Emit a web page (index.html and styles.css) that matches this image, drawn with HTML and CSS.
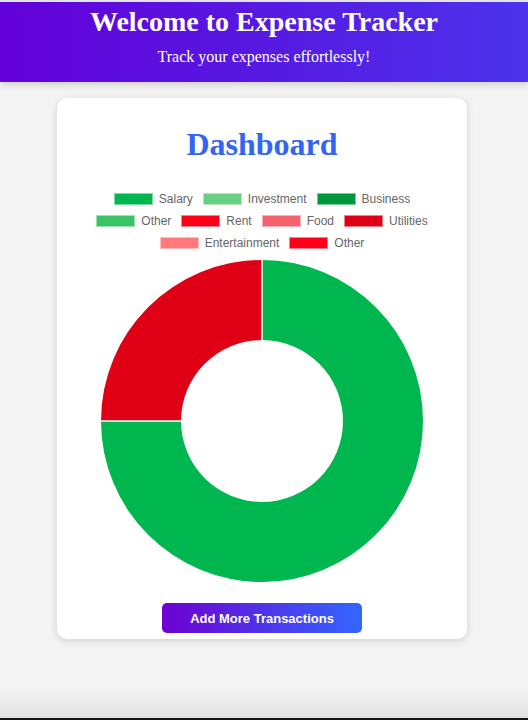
FILE: index.html
```html
<!DOCTYPE html>
<html>
<head>
<meta charset="utf-8">
<link rel="stylesheet" href="styles.css">
</head>
<body>
<header class="site-header">
  <h1 class="site-title">Welcome to Expense Tracker</h1>
  <p class="site-sub">Track your expenses effortlessly!</p>
</header>
<main class="page">
  <section class="card">
    <h2 class="card-title">Dashboard</h2>
    <div class="legend">
      <div class="legend-row">
        <span class="item"><i class="box c-salary"></i>Salary</span>
        <span class="item"><i class="box c-invest"></i>Investment</span>
        <span class="item"><i class="box c-business"></i>Business</span>
      </div>
      <div class="legend-row">
        <span class="item"><i class="box c-other1"></i>Other</span>
        <span class="item"><i class="box c-rent"></i>Rent</span>
        <span class="item"><i class="box c-food"></i>Food</span>
        <span class="item"><i class="box c-util"></i>Utilities</span>
      </div>
      <div class="legend-row">
        <span class="item"><i class="box c-ent"></i>Entertainment</span>
        <span class="item"><i class="box c-other2"></i>Other</span>
      </div>
    </div>
    <svg class="donut" width="324" height="324" viewBox="-162 -162 324 324">
      <path d="M0,-161 A161,161 0 1 1 -161,0 L-81,0 A81,81 0 1 0 0,-81 Z" fill="#00b74f"/>
      <path d="M-161,0 A161,161 0 0 1 0,-161 L0,-81 A81,81 0 0 0 -81,0 Z" fill="#e00016"/>
      <line x1="0" y1="-161" x2="0" y2="-81" stroke="#fff" stroke-width="1.5"/>
      <line x1="-161" y1="0" x2="-81" y2="0" stroke="#fff" stroke-width="1.5"/>
    </svg>
    <button class="btn">Add More Transactions</button>
  </section>
</main>
<div class="bottom-shade"></div>
</body>
</html>
```
FILE: styles.css
```css
html, body {
  margin: 0;
  padding: 0;
}
body {
  background: #f4f4f4;
  font-family: "Liberation Serif", "Times New Roman", serif;
  height: 720px;
  overflow: hidden;
  border-top: 2px solid #e4e4e4;
  box-sizing: border-box;
}
.site-header {
  background: linear-gradient(to right, #6200d9, #4b33eb);
  color: #fff;
  text-align: center;
  height: 80px;
  box-sizing: border-box;
  padding-top: 4px;
  box-shadow: 0 2px 8px rgba(0,0,0,0.18);
  position: relative;
}
.site-title {
  margin: 0;
  font-size: 28px;
  line-height: 32px;
  font-weight: bold;
}
.site-sub {
  margin: 9px 0 0;
  font-size: 16px;
  line-height: 20px;
}
.page {
  display: flex;
  justify-content: center;
  padding: 16px 4px 0 0;
}
.card {
  width: 410px;
  height: 541px;
  box-sizing: border-box;
  background: #fff;
  border-radius: 10px;
  box-shadow: 0 2px 8px rgba(0,0,0,0.15);
  display: flex;
  flex-direction: column;
  align-items: center;
  padding-top: 27px;
}
.card-title {
  margin: 0;
  color: #3366f0;
  font-size: 32px;
  line-height: 38px;
  font-weight: bold;
}
.legend {
  margin-top: 25px;
  display: flex;
  flex-direction: column;
  align-items: center;
  font-family: "Liberation Sans", Arial, sans-serif;
  font-size: 12px;
  color: #666;
}
.legend-row {
  display: flex;
  gap: 10px;
  height: 22px;
  align-items: center;
}
.item {
  display: flex;
  align-items: center;
  gap: 6px;
}
.box {
  display: inline-block;
  width: 37px;
  height: 10px;
  border: 1px solid rgba(255,255,255,0.5);
}
.c-salary { background: #00b74f; }
.c-invest { background: #66d181; }
.c-business { background: #00963c; }
.c-other1 { background: #3ac466; }
.c-rent { background: #ff0018; }
.c-food { background: #f5616c; }
.c-util { background: #e00016; }
.c-ent { background: #ff7a78; }
.c-other2 { background: #ff0018; }
.donut {
  display: block;
  margin-top: 5px;
}
.btn {
  margin-top: 20px;
  width: 200px;
  height: 30px;
  border: none;
  border-radius: 5px;
  background: linear-gradient(to right, #6d00d2, #3366ff);
  color: #fff;
  font-family: "Liberation Sans", Arial, sans-serif;
  font-weight: bold;
  font-size: 13px;
}
.bottom-shade {
  position: fixed;
  left: 0;
  right: 0;
  bottom: 0;
  height: 30px;
  background: linear-gradient(to bottom, rgba(0,0,0,0), rgba(0,0,0,0.08));
  border-bottom: 2px solid #111;
}
```
